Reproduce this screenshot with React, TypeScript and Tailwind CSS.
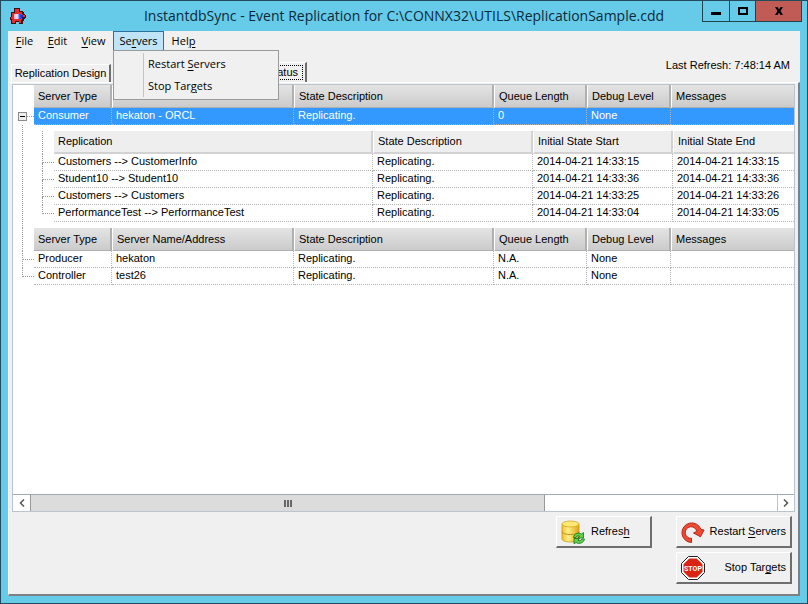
import { useState } from "react"
import { clsx } from "clsx"

type Server = {
  type: string
  name: string
  state: string
  queue: string
  debug: string
}

const consumer: Server = { type: "Consumer", name: "hekaton - ORCL", state: "Replicating.", queue: "0", debug: "None" }

const servers: Server[] = [
  { type: "Producer", name: "hekaton", state: "Replicating.", queue: "N.A.", debug: "None" },
  { type: "Controller", name: "test26", state: "Replicating.", queue: "N.A.", debug: "None" },
]

const replications = [
  { name: "Customers --> CustomerInfo", start: "2014-04-21 14:33:15", end: "2014-04-21 14:33:15" },
  { name: "Student10 --> Student10", start: "2014-04-21 14:33:36", end: "2014-04-21 14:33:36" },
  { name: "Customers --> Customers", start: "2014-04-21 14:33:25", end: "2014-04-21 14:33:26" },
  { name: "PerformanceTest --> PerformanceTest", start: "2014-04-21 14:33:04", end: "2014-04-21 14:33:05" },
]

const serverColumns = ["Server Type", "Server Name/Address", "State Description", "Queue Length", "Debug Level", "Messages"]
const replicationColumns = ["Replication", "State Description", "Initial State Start", "Initial State End"]

const treeLine =
  "bg-[linear-gradient(#999_50%,transparent_50%)] bg-[length:1px_2px] bg-[position:9px_0] bg-repeat-y"

const cellStyle =
  "h-[17px] truncate border-r border-b border-dotted border-[#b4b4b4] py-0 pr-0 pl-1 align-top leading-[14px] last:border-r-0"

// "Re&start" style labels: the letter after & is underlined
function Label({ text }: { text: string }) {
  const [before, rest] = text.split("&")
  return (
    <span className="whitespace-pre">
      {before}
      <u className="underline-offset-2">{rest[0]}</u>
      {rest.slice(1)}
    </span>
  )
}

function AppIcon() {
  return (
    <svg width="18" height="18" viewBox="0 0 18 18" shapeRendering="crispEdges" aria-hidden="true">
      <defs>
        <linearGradient id="plug">
          <stop offset="0" stopColor="#f3a9b8" />
          <stop offset=".35" stopColor="#f4e6ff" />
          <stop offset=".65" stopColor="#3a49dc" />
          <stop offset="1" stopColor="#1420a0" />
        </linearGradient>
      </defs>
      <path d="M5 1h6v3h3v1h1v2h1v1h1v3h-1v1h-1v2h-1v3h-4v-2H7v2H2v-4H1v-3h1V5h3z" fill="#3c1010" />
      <path d="M6 2h4v3h3v2h1v1h2v2h-2v1h-1v2h-1v3h-2v-2H6v2H3v-4H2v-2h1V6h3z" fill="#e62a2e" />
      <path d="M5 7h7v1h2v3h-2v1H5z" fill="url(#plug)" />
    </svg>
  )
}

function RefreshIcon() {
  return (
    <svg width="24" height="24" viewBox="0 0 24 24" aria-hidden="true">
      <defs>
        <linearGradient id="gold">
          <stop offset="0" stopColor="#f3bf2a" />
          <stop offset=".35" stopColor="#fff08a" />
          <stop offset="1" stopColor="#e0a417" />
        </linearGradient>
      </defs>
      <path d="M1 4v15c0 1.800 4 3 8.500 3s8.500-1.200 8.500-3V4z" fill="url(#gold)" stroke="#c9951a" strokeWidth=".8" />
      <path d="M1 11.500c0 2 4 3 8.500 3s8.500-1 8.500-3" fill="none" stroke="#c18f17" />
      <ellipse cx="9.500" cy="4" rx="8.500" ry="3" fill="#ffe873" stroke="#d6a626" strokeWidth=".8" />
      <path
        d="M12.500 17.500c.5-4 5-5.500 8-3.500l2-1.500v5.500h-5.500l1.600-1.800c-1.600-.9-3-.4-3.600 1.300z"
        fill="#62d24c"
        stroke="#17701c"
        strokeWidth=".8"
      />
      <path
        d="M23.500 19c-.5 4-5.500 5.500-8.500 3.500l-2 1.300v-5.300h5.500l-1.600 1.800c1.600.9 3.200.4 3.800-1.300z"
        fill="#62d24c"
        stroke="#17701c"
        strokeWidth=".8"
      />
    </svg>
  )
}

function RestartIcon() {
  return (
    <svg width="24" height="24" viewBox="0 0 24 24" aria-hidden="true">
      <path
        d="M10.500 22.500A9.800 9.800 0 1 1 20 9.500l3 .5-3.500 6.800L12.500 13l3.200-1.600A5.800 5.800 0 1 0 10.500 18.300z"
        fill="#ee4a30"
        stroke="#b3261a"
      />
    </svg>
  )
}

function StopIcon() {
  return (
    <svg width="24" height="24" viewBox="0 0 24 24" aria-hidden="true">
      <path d="M7.500 .5h9l7 7v9l-7 7h-9l-7-7v-9z" fill="#fff" stroke="#222" />
      <path d="M8.300 2.500h7.400l5.800 5.800v7.400l-5.800 5.800H8.300l-5.800-5.800V8.300z" fill="#d92414" />
      <text x="12" y="15" textAnchor="middle" fontSize="7" fontWeight="700" fontFamily="Roboto, sans-serif" fill="#fff">
        STOP
      </text>
    </svg>
  )
}

function TitleBar() {
  return (
    <header className="flex h-[30px] items-start pr-[5px] pl-2">
      <div className="flex h-[30px] w-[97px] items-center">
        <AppIcon />
      </div>
      <h1 className="flex-1 truncate text-center font-['Open_Sans',sans-serif] text-[14px] leading-[30px] text-[#0b2a3a]">
        InstantdbSync - Event Replication for C:\CONNX32\UTILS\ReplicationSample.cdd
      </h1>
      <div className="flex h-[21px] border border-t-0 border-[#23424f]">
        <button aria-label="Minimize" className="flex w-[27px] items-center justify-center border-r border-[#23424f]">
          <span className="mt-1 h-[3px] w-[10px] bg-black" />
        </button>
        <button aria-label="Maximize" className="flex w-[26px] items-center justify-center border-r border-[#23424f]">
          <span className="h-2 w-[10px] border-2 border-black" />
        </button>
        <button aria-label="Close" className="flex w-[45px] items-center justify-center bg-[#c15b55]">
          <svg width="10" height="8" viewBox="0 0 10 8" aria-hidden="true">
            <path d="M1 0h2.500L5 2.500 6.500 0H9L6.500 4 9 8H6.500L5 5.500 3.500 8H1l2.500-4z" />
          </svg>
        </button>
      </div>
    </header>
  )
}

function MenuBar() {
  const [open, setOpen] = useState(true)

  return (
    <nav className="flex h-5 font-['Open_Sans',sans-serif] text-[11px] leading-[18px]">
      <button className="w-[33px] border border-transparent"><Label text="&File" /></button>
      <button className="w-[33px] border border-transparent"><Label text="&Edit" /></button>
      <button className="w-[39px] border border-transparent"><Label text="&View" /></button>
      <div className="relative">
        <button
          aria-expanded={open}
          onClick={() => setOpen(!open)}
          className={clsx("h-5 w-[51px] border", open ? "border-[#2f6f9f] bg-[#bfe3f7]" : "border-transparent")}
        >
          <Label text="Se&rvers" />
        </button>
        {open && (
          <div role="menu" className="absolute top-[19px] left-0 z-10 w-[166px] border border-[#999] bg-[#f0f0f0] py-[2px]">
            {["Restart &Servers", "Stop Tar&gets"].map((item) => (
              <div key={item} className="flex h-[22px]">
                <span className="w-[30px] border-r border-[#c4c4c4]" />
                <button role="menuitem" className="flex-1 pl-1 text-left">
                  <Label text={item} />
                </button>
              </div>
            ))}
          </div>
        )}
      </div>
      <button className="w-[39px] border border-transparent"><Label text="Hel&p" /></button>
    </nav>
  )
}

function ServerHeader({ nested }: { nested?: boolean }) {
  return (
    <tr>
      <td className={clsx("p-0", nested && treeLine)} />
      {serverColumns.map((c) => (
        <th
          key={c}
          className="h-[23px] truncate border-r-2 border-b border-l border-r-[#b0b0b0] border-b-[#b0b0b0] border-l-white bg-linear-to-b from-[#e4e4e4] to-[#cbcbcb] py-0 pl-1 text-left font-normal first-of-type:border-l-0 last:border-r-0"
        >
          {c}
        </th>
      ))}
    </tr>
  )
}

function ServerCells({ server, selected }: { server: Server; selected?: boolean }) {
  return (
    <>
      {[server.type, server.name, server.state, server.queue, server.debug, ""].map((value, i) => (
        <td key={i} className={clsx(cellStyle, selected && "bg-[#3399ff] text-white")}>
          {value}
        </td>
      ))}
    </>
  )
}

function ReplicationTable() {
  return (
    <table className="w-full table-fixed border-separate border-spacing-0">
      <colgroup>
        <col className="w-3" />
        <col className="w-[319px]" />
        <col className="w-[160px]" />
        <col className="w-[140px]" />
        <col />
      </colgroup>
      <thead>
        <tr>
          <td className="border-l border-dotted border-[#999] p-0" />
          {replicationColumns.map((c) => (
            <th
              key={c}
              className="h-[23px] truncate border-r-2 border-b-2 border-l border-r-[#d2d2d2] border-b-[#d2d2d2] border-l-white bg-[#eee] py-0 pl-1 text-left font-normal first-of-type:border-l-0 last:border-r-0"
            >
              {c}
            </th>
          ))}
        </tr>
      </thead>
      <tbody>
        {replications.map((r, i) => (
          <tr key={i}>
            <td className="h-[17px] p-0 align-top">
              <div className="h-[9px] border-b border-l border-dotted border-[#999]" />
              {i < replications.length - 1 && <div className="h-2 border-l border-dotted border-[#999]" />}
            </td>
            {[r.name, "Replicating.", r.start, r.end].map((value, j) => (
              <td key={j} className={cellStyle}>
                {value}
              </td>
            ))}
          </tr>
        ))}
      </tbody>
    </table>
  )
}

function ServerTable() {
  const [expanded, setExpanded] = useState(true)

  return (
    <table className="w-full table-fixed border-separate border-spacing-0">
      <colgroup>
        <col className="w-[21px]" />
        <col className="w-[78px]" />
        <col className="w-[182px]" />
        <col className="w-[200px]" />
        <col className="w-[93px]" />
        <col className="w-[84px]" />
        <col />
      </colgroup>
      <tbody>
        <ServerHeader />
        <tr>
          <td className="p-0">
            <div className="flex items-center pl-[5px]">
              <button
                aria-label={expanded ? "Collapse" : "Expand"}
                onClick={() => setExpanded(!expanded)}
                className="flex h-[9px] w-[9px] items-center justify-center border border-[#8a8a8a] bg-[#eee]"
              >
                <span className="h-px w-[5px] bg-black" />
              </button>
              <span className="flex-1 border-b border-dotted border-[#999]" />
            </div>
          </td>
          <ServerCells server={consumer} selected />
        </tr>
        {expanded && (
          <tr>
            <td className={clsx("p-0", treeLine)} />
            <td colSpan={6} className="py-[6px] pr-0 pl-2">
              <ReplicationTable />
            </td>
          </tr>
        )}
        <ServerHeader nested />
        {servers.map((s, i) => (
          <tr key={s.type}>
            <td className={clsx("p-0 pl-[9px] align-top", i < servers.length - 1 && treeLine)}>
              <div className="h-[9px] border-b border-l border-dotted border-[#999]" />
            </td>
            <ServerCells server={s} />
          </tr>
        ))}
      </tbody>
    </table>
  )
}

function ScrollBar() {
  return (
    <div className="flex h-[17px] border-t border-[#a3a9b1] bg-white">
      <button aria-label="Scroll left" className="flex w-[17px] items-center justify-center">
        <svg width="6" height="8" viewBox="0 0 6 8" fill="none" stroke="#555" strokeWidth="1.500" aria-hidden="true">
          <path d="M5 .5 1.500 4 5 7.500" />
        </svg>
      </button>
      <div className="flex flex-1">
        <div className="flex w-[69%] items-center justify-center gap-px border-r border-l border-[#999] bg-[#dcdcdc]">
          <span className="h-[7px] w-[2px] bg-[#666]" />
          <span className="h-[7px] w-[2px] bg-[#666]" />
          <span className="h-[7px] w-[2px] bg-[#666]" />
        </div>
      </div>
      <button aria-label="Scroll right" className="flex w-[17px] items-center justify-center border-l border-[#c0c4ca]">
        <svg width="6" height="8" viewBox="0 0 6 8" fill="none" stroke="#555" strokeWidth="1.500" aria-hidden="true">
          <path d="M1 .5 4.500 4 1 7.500" />
        </svg>
      </button>
    </div>
  )
}

const buttonStyle =
  "flex h-8 items-center border-t border-r-2 border-b-2 border-l border-t-white border-r-[#6e6e6e] border-b-[#6e6e6e] border-l-white bg-[#f0f0f0] px-1"

export default function App() {
  return (
    <main className="flex min-h-screen flex-col border border-[#234b5c] bg-[#66cae9] font-['Liberation_Sans',sans-serif] text-[11px] text-black">
      <TitleBar />
      <div className="mx-[7px] mb-[7px] flex flex-1 flex-col bg-[#f0f0f0]">
        <MenuBar />
        <div className="flex h-[31px] items-end pl-[3px]">
          <button role="tab" className="h-[18px] w-[100px] border-t border-r-2 border-l border-t-white border-r-[#6e6e6e] border-l-white">
            Replication Design
          </button>
          <button role="tab" aria-selected="true" className="flex h-5 w-[196px] justify-end border-t border-r-2 border-t-white border-r-[#6e6e6e] p-[2px]">
            <span className="border border-dotted border-black pr-1 leading-[13px]">Server Status</span>
          </button>
          <p className="mb-[9px] flex-1 pr-[10px] text-right">Last Refresh: 7:48:14 AM</p>
        </div>
        <section className="flex flex-1 flex-col border-t border-r-2 border-b-2 border-l border-t-white border-r-[#7d8084] border-b-[#7d8084] border-l-white px-[3px] pt-px">
          <div className="flex flex-1 flex-col border border-[#b9c4ce] bg-white">
            <div className="flex-1">
              <ServerTable />
            </div>
            <ScrollBar />
          </div>
          <div className="flex items-start justify-end gap-6 pt-1 pr-[3px] pb-[10px]">
            <button className={clsx(buttonStyle, "w-24 gap-[6px]")}>
              <RefreshIcon />
              <Label text="Refres&h" />
            </button>
            <div className="flex w-[116px] flex-col gap-1">
              <button className={clsx(buttonStyle, "justify-between")}>
                <RestartIcon />
                <Label text="Restart &Servers" />
              </button>
              <button className={clsx(buttonStyle, "justify-between")}>
                <StopIcon />
                <Label text="Stop Tar&gets" />
              </button>
            </div>
          </div>
        </section>
      </div>
    </main>
  )
}
